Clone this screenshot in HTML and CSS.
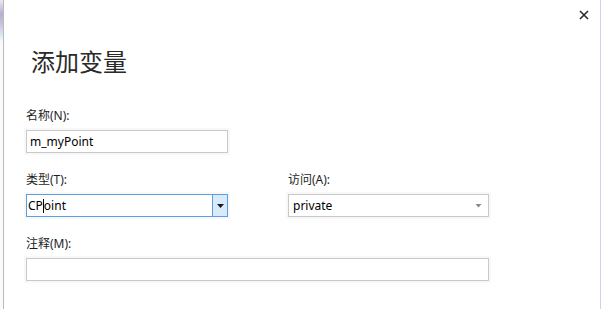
FILE: index.html
```html
<!DOCTYPE html>
<html lang="zh-CN">
<head>
  <meta charset="UTF-8">
  <title>添加变量</title>
  <link rel="stylesheet" href="styles.css">
</head>
<body>
  <div class="window">
    <div class="titlebar">
      <span class="close" title="关闭">
        <svg width="10" height="10" viewBox="0 0 10 10">
          <path d="M1 1 L9 9 M9 1 L1 9" stroke="#2b2b2b" stroke-width="1.6" fill="none"/>
        </svg>
      </span>
    </div>

    <h1 class="title">添加变量</h1>

    <div class="form">
      <div class="field">
        <label>名称(N):</label>
        <div class="textbox name-box">m_myPoint</div>
      </div>

      <div class="row">
        <div class="field">
          <label>类型(T):</label>
          <div class="combo focused">
            <span class="value">CP<span class="caret"></span>oint</span>
            <span class="drop">
              <svg width="7" height="4" viewBox="0 0 7 4"><path d="M0 0 H7 L3.5 4 Z" fill="#1a1a1a"/></svg>
            </span>
          </div>
        </div>
        <div class="field">
          <label>访问(A):</label>
          <div class="combo">
            <span class="value">private</span>
            <span class="drop">
              <svg width="7" height="4" viewBox="0 0 7 4"><path d="M0.5 0 H6.5 L3.5 3.5 Z" fill="#8a8a8a"/></svg>
            </span>
          </div>
        </div>
      </div>

      <div class="field">
        <label>注释(M):</label>
        <div class="textbox comment-box"></div>
      </div>
    </div>
  </div>
</body>
</html>
```

FILE: styles.css
```css
body {
  margin: 0;
  background: linear-gradient(to bottom, #ece8f2 0, #b9aed0 14px, #cfc6e0 26px, #d6e6ee 34px, #fafafa 42px, #fafafa 100%) left top / 3px 100% no-repeat, #fff;
  font-family: "Noto Sans", "Noto Sans CJK SC", sans-serif;
  color: #1e1e1e;
}
.window {
  margin-left: 3px;
  width: 598px;
  height: 309px;
  box-sizing: border-box;
  border-left: 1px solid #b9b9b9;
  border-right: 1px solid #d4d0e6;
  background-color: #fff;
}
.titlebar {
  display: flex;
  justify-content: flex-end;
  align-items: flex-start;
  height: 28px;
  padding: 10px 11px 0 0;
  box-sizing: border-box;
}
.close {
  display: block;
  width: 10px;
  height: 10px;
}
.close svg {
  display: block;
}
.title {
  margin: 15px 0 0 27px;
  font-family: "Noto Sans CJK SC", sans-serif;
  font-size: 24px;
  font-weight: normal;
  line-height: 36px;
  color: #2a2a2a;
}
.form {
  margin-top: 27px;
  padding-left: 22px;
}
.field {
  margin-bottom: 17px;
}
.field label {
  display: block;
  font-size: 12px;
  line-height: 20px;
  margin-bottom: 4px;
}
.textbox {
  height: 23px;
  box-sizing: border-box;
  border: 1px solid #c9c9c9;
  box-shadow: 0 0 0 2px #f8f8f8;
  font-size: 12px;
  line-height: 21px;
  padding-left: 3px;
  color: #000;
}
.name-box {
  width: 202px;
}
.comment-box {
  width: 463px;
}
.row {
  display: grid;
  grid-template-columns: 202px 201px;
  column-gap: 60px;
}
.combo {
  display: flex;
  height: 23px;
  box-sizing: border-box;
  border: 1px solid #c9c9c9;
  box-shadow: 0 0 0 2px #f8f8f8;
  font-size: 12px;
  line-height: 21px;
  color: #000;
}
.combo .value {
  flex: 1;
  padding-left: 4px;
}
.combo .drop {
  display: flex;
  align-items: center;
  justify-content: center;
  width: 14px;
  padding-right: 3px;
}
.combo.focused {
  border-color: #5c9fe0;
}
.combo.focused .value {
  padding-left: 1px;
}
.combo.focused .drop {
  width: 14px;
  padding-right: 0;
  border-left: 1px solid #5c9fe0;
  background-color: #d9eafa;
}
.caret {
  display: inline-block;
  width: 1px;
  height: 14px;
  margin: 0 0 -3px 0;
  background-color: #000;
}
```
